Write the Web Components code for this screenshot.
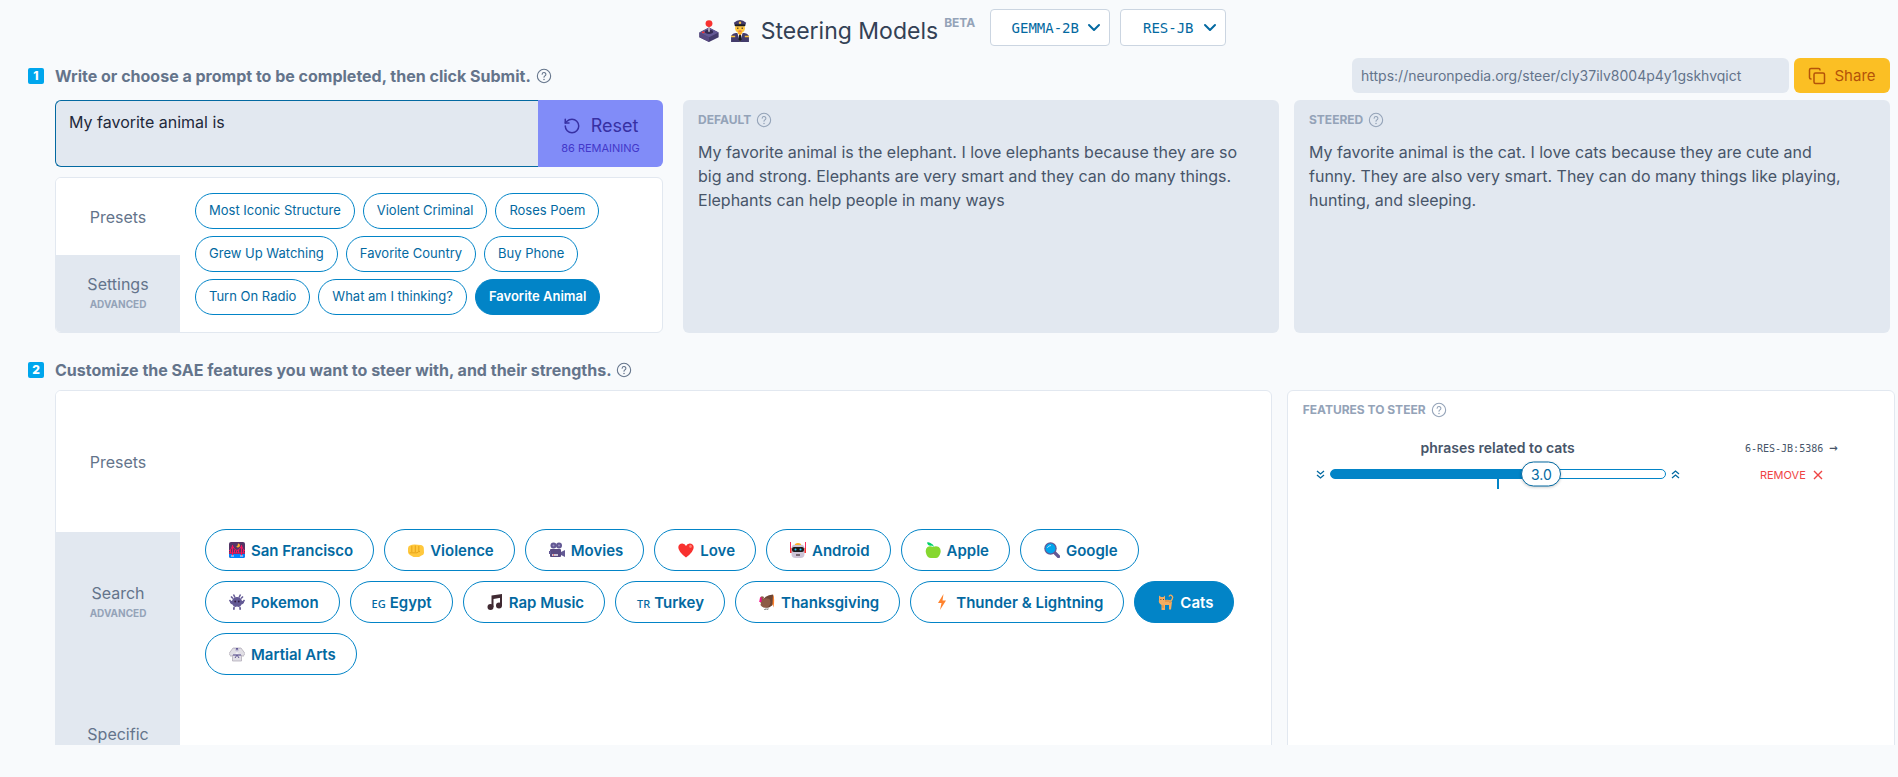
<!DOCTYPE html>
<html lang="en">
<head>
<meta charset="utf-8">
<title>Steering Models</title>
<style>
  body { margin: 0; background: #f8fafc; color: #475569; font-family: Inter, sans-serif; font-size: 16px; }
</style>
</head>
<body>
<steer-app></steer-app>
<script>
const define = (name, html, setup) => {
  const template = document.createElement('template');
  template.innerHTML = `<style>*{box-sizing:border-box}button,input,textarea,select{font-family:inherit;margin:0}</style>` + html;
  customElements.define(name, class extends HTMLElement {
    constructor() { super(); this.attachShadow({ mode: 'open' }).append(template.content.cloneNode(true)); }
    connectedCallback() { if (setup) setup(this, this.shadowRoot); }
  });
};

const EMOJI = {
  joystick: '<path d="M1 9l7-3.5L15 9v3.500l-7 3.500-7-3.500z" fill="#433b6b"/><path d="M1 9l7 3.500V16l-7-3.500z" fill="#594a82"/><path d="M1 9l7-3.500L15 9l-7 3.500z" fill="#635994"/><ellipse cx="8" cy="8.600" rx="3" ry="1.500" fill="#342b52"/><path d="M7.300 4h1.400v4.500H7.300z" fill="#b4acbc"/><circle cx="8" cy="2.600" r="2.500" fill="#f8312f"/><ellipse cx="3.800" cy="9" rx="1" ry=".6" fill="#f8312f"/>',
  pilot: '<path d="M1.500 16v-3.500Q1.500 10 5 9.500h6q3.500.5 3.500 3V16z" fill="#433b6b"/><path d="M6 9h4l-2 7z" fill="#fff"/><path d="M7.400 10h1.200l.5 4L8 16l-1-2z" fill="#1c1c1c"/><circle cx="8" cy="6" r="3.600" fill="#ffc83d"/><path d="M6.500 8h3v2L8 11l-1.500-1z" fill="#ffb02e"/><path d="M3.500 2Q8-2 12.500 2L11.500 4.500h-7z" fill="#433b6b"/><path d="M4.200 3.200h7.600v1.200H4.200z" fill="#1c1c1c"/><circle cx="8" cy="2" r=".9" fill="#f9c23c"/><path d="M1.500 12h3M11.500 12h3" stroke="#f9c23c"/><path d="M6 6h.8M9.200 6h.8" stroke="#402a32"/><path d="M7 8h2" stroke="#bb1d80" stroke-width=".5"/>',
  bridge: '<rect width="16" height="16" rx="2" fill="#533566"/><path d="M0 12h16v2q0 2-2 2H2q-2 0-2-2z" fill="#0084ff"/><path d="M0 11h16M3.500 3v11M12.500 3v11M0 9Q2.500 7 3.500 4 8 13 12.500 4q1 3 3.500 5M1.500 8v3M5.500 8v3M7.500 9v2M9.500 8v3M14.500 8v3" fill="none" stroke="#f8145d" stroke-width="1"/><path d="M9 1.500a2 2 0 1 1-1.800 3Q9 4 9 1.500" fill="#ffb02e"/><path d="M2 14h3M11 14h3" stroke="#e6e6e6"/>',
  fist: '<path d="M0 6.500Q0 4 2 3.500l2-.7 2.500-.3 3 .2 3 .3q3 .3 3.300 3L16 11q-.3 2-2.500 2.500L11 15H5.500L2 13Q.2 12 0 10z" fill="#ffc83d"/><path d="M3.800 4v6M7.300 3.500V10M10.800 4v5.500M1.500 10.800h7.500q1-1.300 3-1.300" stroke="#e09a10" fill="none" stroke-width=".8"/>',
  movie: '<circle cx="4.500" cy="3.500" r="3" fill="#635994"/><circle cx="10" cy="3.500" r="3" fill="#635994"/><circle cx="4.500" cy="3.500" r="1" fill="#9b8fc0"/><circle cx="10" cy="3.500" r="1" fill="#9b8fc0"/><rect x="1" y="7" width="11" height="8" rx="1" fill="#594a82"/><path d="M12 10l4-2v7l-4-2z" fill="#635994"/><path d="M3 12h6v2H3z" fill="#cdc4d6"/><path d="M4 13h1" stroke="#f8312f"/><path d="M0 9h2v3H0z" fill="#635994"/>',
  heart: '<path d="M8 15.500Q0 9.500.3 5 .8 1.500 4.300 1.500 7 1.500 8 4q1-2.500 3.700-2.500 3.500 0 4 3.500Q16 9.500 8 15.500z" fill="#f8312f"/><ellipse cx="12.500" cy="4.300" rx="1.300" ry="1.600" fill="#ff7d70"/>',
  robot: '<path d="M.5 0v9M15.500 0v9" stroke="#f92f60"/><rect x="0" y="6" width="2" height="5" fill="#f8312f"/><rect x="14" y="6" width="2" height="5" fill="#f8312f"/><rect x="1.500" y="2.500" width="13" height="13.500" rx="4" fill="#cdc4d6"/><path d="M5 2q3-2 6 0v1H5z" fill="#ffb02e"/><rect x="2" y="5" width="12" height="5" rx="2" fill="#1c1c1c"/><circle cx="5.500" cy="7.500" r="1" fill="#26c9fc"/><circle cx="10.500" cy="7.500" r="1" fill="#26c9fc"/><path d="M6 13h4" stroke="#402a32" stroke-width="1.200"/>',
  apple: '<path d="M8 5q3-1.500 5.800 0 2.600 2 1.600 6-1.500 5-4.500 5h-5Q2 16 1 11 0 7 2.500 5 5 3.500 8 5" fill="#86d72f"/><path d="M8.500 5Q9 3 7 2 4-.5 2 .5 3 4.500 7 3.500" fill="#00d26a"/>',
  search: '<path d="M9.500 9.500l5 5" stroke="#635994" stroke-width="3.200" stroke-linecap="round"/><circle cx="6.500" cy="6.500" r="6.200" fill="#635994"/><circle cx="6.500" cy="6.500" r="5" fill="#00a6ed"/><path d="M3.500 5.500q1-2 3-2" stroke="#aeddff" fill="none" stroke-linecap="round"/>',
  alien: '<path d="M4.500.5l1.500 3M11.500.5l-1.500 3M2 2.500l2 2M14 2.500l-2 2M.5 6l2 3M15.500 6l-2 3M5 13v2H4M11 13v2h1" stroke="#635994" stroke-width="1.500" fill="none"/><path d="M8 3q4 0 5 4l2-.5q.5 3-2.500 4-1 2.500-3 2.500L8 12.500 6.500 13q-2 0-3-2.500-3-1-2.500-4L3 7q1-4 5-4" fill="#635994"/><circle cx="6.200" cy="7.500" r=".9" fill="#321b41"/><circle cx="9.800" cy="7.500" r=".9" fill="#321b41"/>',
  music: '<path d="M4.500 1.500L15 0v3.500L6.500 5v8h-2z" fill="#402a32"/><path d="M13 2h2v10h-2z" fill="#402a32"/><circle cx="3.500" cy="13" r="3" fill="#402a32"/><circle cx="12" cy="11.500" r="3" fill="#402a32"/>',
  turkey: '<path d="M3 8Q5 1 14 .5q1.500 4 .5 9-3 5-8 4z" fill="#6d4534"/><path d="M14 .5q2 4 .5 13l-1-3z" fill="#ff822d"/><path d="M2.500 7q3-4 8-2 2.500 5-1.500 8-5 2-7.500-2z" fill="#8d5b46"/><path d="M5 3Q2 1 1 4l.5 5q3.500 1 3-4z" fill="#8d5b46"/><path d="M1 3.500h1.500V8H.2z" fill="#f70a8d"/><path d="M7 14v1.500H5M9 14v1.500H7.500" stroke="#999" fill="none"/>',
  bolt: '<path d="M9.500 0L4 9h3.500L6 16l6-9.500H8.500z" fill="#ff822d"/>',
  cat: '<path d="M12 8q4-4 2-6-1.500-2-3 .5" fill="none" stroke="#f3ad61" stroke-width="1.300"/><path d="M1 1.500L3 3h2.500l1.500-1.500V6q5-1 7 2l-1 7.500h-2V11H7v5H3.500v-5Q0 9 1 6z" fill="#f3ad61"/><path d="M8 6v2M10 6v2M12 7v2M5 11v3" stroke="#d3883e"/><path d="M2.500 5.500h.8M5 5.500h.8" stroke="#402a32"/>',
  gi: '<path d="M4 2h8l4 5.500-2 3-1.500-1.500v6h-9V9L2 10.500 0 7.500z" fill="#e1dfe5" stroke="#aaa5b2" stroke-width=".7"/><path d="M5.500 2h5L8 7z" fill="#635994"/><path d="M6 2l3 6M10 2L7 8" stroke="#fff" stroke-width=".8"/><path d="M4 9h8" stroke="#635994" stroke-width="1.200"/><path d="M8 9l-2 3M8 9l2 3" stroke="#635994"/>'
};

define('emoji-icon', `
  <style>:host{display:inline-block;flex:none;width:16px;height:16px}svg{display:block;width:100%;height:100%}</style>
  <svg viewBox="0 0 16 16" aria-hidden="true"></svg>`,
  (el, root) => { root.querySelector('svg').innerHTML = EMOJI[el.getAttribute('name')]; });

define('help-icon', `
  <style>:host{display:inline-block;flex:none;width:16px;height:16px}svg{display:block}</style>
  <svg width="16" height="16" viewBox="0 0 24 24" fill="none" stroke="currentColor" stroke-width="1.600" stroke-linecap="round" stroke-linejoin="round" aria-hidden="true"><circle cx="12" cy="12" r="10"/><path d="M9.200 9.300a2.800 2.800 0 0 1 5.600.4c0 2-2.800 2.200-2.800 4.100"/><path d="M12 17.200v.2" stroke-width="2.200"/></svg>`);

define('model-select', `
  <style>
    :host{display:block;position:relative;color:#0369a1}
    select{appearance:none;display:block;min-width:106px;height:37px;padding:0 30px 0 20px;border:1px solid #cbd5e1;border-radius:4px;background:#fff;color:inherit;font:14px "DejaVu Sans Mono",monospace;text-align:center}
    svg{position:absolute;right:9px;top:12px;pointer-events:none}
  </style>
  <select><option></option></select>
  <svg width="14" height="14" viewBox="0 0 14 14" fill="none" stroke="currentColor" stroke-width="2" stroke-linecap="round" stroke-linejoin="round" aria-hidden="true"><path d="M2 4l5 5 5-5"/></svg>`,
  (el, root) => {
    root.querySelector('option').textContent = el.getAttribute('value');
    root.querySelector('select').setAttribute('aria-label', el.getAttribute('label'));
  });

define('step-heading', `
  <style>
    :host{display:flex;align-items:center;color:#64748b}
    .n{width:16px;height:16px;margin-right:11px;border-radius:2px;background:#00a6ed;color:#fff;font-size:12px;line-height:16px;font-weight:800;text-align:center}
    h2{margin:0 5px 0 0;font-size:16px;line-height:24px;font-weight:700}
  </style>
  <span class="n"></span><h2><slot></slot></h2><help-icon></help-icon>`,
  (el, root) => { root.querySelector('.n').textContent = el.getAttribute('step'); });

define('share-bar', `
  <style>
    :host{display:flex;gap:5px}
    input{width:437px;height:35px;padding:0 9px;border:0;border-radius:6px;background:#e2e8f0;color:#64748b;font-size:14px}
    button{display:flex;align-items:center;justify-content:center;gap:8px;width:96px;height:35px;padding:0;border:0;border-radius:6px;background:#fbbf24;color:#b45309;font-size:15px}
  </style>
  <input aria-label="Share link" readonly value="https://neuronpedia.org/steer/cly37ilv8004p4y1gskhvqict">
  <button type="button"><svg width="18" height="18" viewBox="0 0 24 24" fill="none" stroke="currentColor" stroke-width="2" stroke-linecap="round" stroke-linejoin="round" aria-hidden="true"><rect x="8" y="8" width="14" height="14" rx="2"/><path d="M4 16c-1.100 0-2-.9-2-2V4c0-1.100.9-2 2-2h10c1.100 0 2 .9 2 2"/></svg>Share</button>`);

define('prompt-box', `
  <style>
    :host{display:flex;height:67px}
    textarea{display:block;flex:1;min-width:0;padding:11px 13px;resize:none;border:1px solid #0369a1;border-right:0;border-radius:6px 0 0 6px;background:#e2e8f0;color:#1e293b;font-size:16px;line-height:20px}
    button{width:125px;padding:4px 0 0;border:0;border-radius:0 6px 6px 0;background:#818cf8;color:#3730a3}
    .main{display:flex;align-items:center;justify-content:center;gap:10px;font-size:18px;line-height:24px}
    .sub{display:block;font-size:11px;line-height:20px;color:#4338ca}
  </style>
  <textarea aria-label="Prompt">My favorite animal is</textarea>
  <button type="button"><span class="main"><svg width="18" height="18" viewBox="0 0 24 24" fill="none" stroke="currentColor" stroke-width="2" stroke-linecap="round" stroke-linejoin="round" aria-hidden="true"><path d="M3 12a9 9 0 1 0 9-9 9.750 9.750 0 0 0-6.740 2.740L3 8"/><path d="M3 3v5h5"/></svg>Reset</span><span class="sub">86 REMAINING</span></button>`);

define('preset-pill', `
  <style>
    :host{display:block}
    button{display:flex;align-items:center;height:36px;padding:0 13px 2px;border:1px solid #0284c7;border-radius:18px;background:#fff;color:#0369a1;font-size:13px;font-weight:400;white-space:nowrap}
    :host([large]) button{height:42px;padding:0 20px 0 23px;border-radius:21px;font-size:15px;font-weight:600;gap:6px}
    :host([flag]) button{gap:4px;padding-left:21px}
    :host([active]) button{background:#0284c7;color:#fff;font-weight:600}
    small{font:500 11px "Noto Sans",sans-serif;padding-top:2px}
  </style>
  <button type="button"><slot></slot></button>`,
  (el, root) => {
    const button = root.querySelector('button');
    if (el.getAttribute('icon') && !button.querySelector('emoji-icon')) {
      const icon = document.createElement('emoji-icon');
      icon.setAttribute('name', el.getAttribute('icon'));
      button.prepend(icon);
    }
    if (el.getAttribute('flag') && !button.querySelector('small')) {
      const flag = document.createElement('small');
      flag.textContent = el.getAttribute('flag');
      button.prepend(flag);
    }
  });

define('side-tab', `
  <style>
    :host{display:flex;flex:1 1 0}
    button{flex:1;padding:0;border:0;background:#e2e8f0;color:#64748b;font-size:16px;line-height:20px}
    :host([selected]) button{background:#fff}
    small{display:block;min-height:20px;font-size:10px;line-height:20px;font-weight:700;color:#94a3b8}
  </style>
  <button type="button"><slot></slot><small></small></button>`,
  (el, root) => {
    const note = root.querySelector('small');
    if (el.hasAttribute('note')) note.textContent = el.getAttribute('note'); else note.remove();
  });

define('tab-panel', `
  <style>
    :host{display:flex;overflow:hidden;border:1px solid #e2e8f0;border-radius:6px;background:#fff}
    .tabs{display:flex;flex:none;flex-direction:column;width:124px}
    .pills{display:flex;flex:1;flex-wrap:wrap;align-content:center;gap:var(--pill-row-gap,7px) var(--pill-gap,8px);padding:0 var(--pill-pad,15px) 2px}
  </style>
  <div class="tabs"><slot name="tab"></slot></div><div class="pills"><slot></slot></div>`);

define('section-label', `
  <style>:host{display:flex;align-items:center;gap:5px;color:#94a3b8;font-size:12px;line-height:16px;font-weight:700}</style>
  <slot></slot><help-icon></help-icon>`);

define('output-card', `
  <style>
    :host{display:block;padding:12px 30px 12px 15px;border-radius:6px;background:#e2e8f0}
    p{margin:12px 0 0;font-size:16px;line-height:24px;color:#475569}
  </style>
  <section-label></section-label><p><slot></slot></p>`,
  (el, root) => { root.querySelector('section-label').textContent = el.getAttribute('label'); });

define('feature-row', `
  <style>
    :host{display:grid;grid-template-columns:364px 1fr;column-gap:24px;align-items:center}
    .name{font-size:14px;line-height:20px;font-weight:600;text-align:center;color:#475569}
    .meta{text-align:center}
    .meta a{color:#475569;font:10px/20px "DejaVu Sans Mono",monospace;text-decoration:none}
    .meta a span{font-size:14px}
    .meta button{display:inline-flex;align-items:center;gap:7px;padding:0;border:0;background:none;color:#ef4444;font-size:11px;line-height:20px}
    .slider{display:flex;align-items:center;justify-content:space-between;height:30px;color:#0369a1}
    .track{position:relative;width:336px;height:10px}
    input{appearance:none;display:block;width:100%;height:10px;border:1px solid #0284c7;border-radius:5px;background:linear-gradient(90deg,#0284c7 63%,#fff 63%)}
    input::-webkit-slider-thumb{appearance:none;width:40px;height:10px;opacity:0}
    output{position:absolute;left:63%;top:50%;transform:translate(-50%,-50%);width:40px;height:25px;border:1px solid #0369a1;border-radius:13px;background:#fff;font-size:14px;line-height:23px;text-align:center;box-shadow:0 1px 3px #0003;pointer-events:none}
    .tick{position:absolute;left:50%;top:100%;width:2px;height:10px;transform:translateX(-50%);background:#0284c7}
  </style>
  <label class="name" for="strength"><slot></slot></label>
  <div class="meta"><a href="#feature">6-RES-JB:5386 <span>→</span></a></div>
  <div class="slider">
    <svg width="9" height="9" viewBox="0 0 9 9" fill="none" stroke="currentColor" stroke-width="1.300" aria-hidden="true"><path d="M1 1l3.500 3L8 1M1 5l3.500 3L8 5"/></svg>
    <div class="track"><input id="strength" type="range" min="-10" max="10" step=".1" value="3"><span class="tick"></span><output for="strength">3.0</output></div>
    <svg width="9" height="9" viewBox="0 0 9 9" fill="none" stroke="currentColor" stroke-width="1.300" aria-hidden="true"><path d="M1 4l3.500-3L8 4M1 8l3.500-3L8 8"/></svg>
  </div>
  <div class="meta"><button type="button">REMOVE<svg width="10" height="10" viewBox="0 0 10 10" stroke="currentColor" stroke-width="1.400" aria-hidden="true"><path d="M1 1l8 8M9 1l-8 8"/></svg></button></div>`);

define('steer-app', `
  <style>
    :host{display:flex;flex-direction:column;height:100vh;overflow:hidden;padding-bottom:32px;box-sizing:border-box}
    header{display:flex;flex:none;justify-content:center;height:58px;padding:9px 0 0 36px}
    header emoji-icon{width:22px;height:22px;margin:11px 9px 0 0}
    h1{margin:6px 6px 0 1px;font-size:23px;line-height:32px;font-weight:400;color:#334155}
    sup{margin:6px 15px 0 0;font-size:12px;line-height:16px;font-weight:700;color:#94a3b8}
    model-select{margin-right:10px}
    .bar{display:flex;flex:none;align-items:center;justify-content:space-between;height:35px;margin:0 8px 7px 28px}
    .top{display:grid;flex:none;grid-template-columns:33.5fr 66.5fr;gap:20px;height:233px;margin:0 8px 0 55px}
    .left{display:flex;flex-direction:column;gap:10px}
    .left tab-panel{flex:1}
    .outputs{display:grid;grid-template-columns:1fr 1fr;gap:15px}
    .second{flex:none;height:57px;margin-left:28px;padding-top:17px;box-sizing:border-box}
    .view{flex:1;min-height:0;overflow:hidden;margin:0 3px 0 55px}
    .bottom{display:grid;grid-template-columns:2fr 1fr;gap:15px;height:426px}
    .bottom tab-panel{--pill-row-gap:10px;--pill-gap:10px;--pill-pad:25px}
    .features{padding:11px 15px;border:1px solid #e2e8f0;border-radius:6px;background:#fff}
    feature-row{margin:18px 0 0 13px}
  </style>
  <header>
    <emoji-icon name="joystick"></emoji-icon><emoji-icon name="pilot"></emoji-icon>
    <h1>Steering Models</h1><sup>BETA</sup>
    <model-select label="Model" value="GEMMA-2B"></model-select><model-select label="Source" value="RES-JB"></model-select>
  </header>
  <div class="bar"><step-heading step="1">Write or choose a prompt to be completed, then click Submit.</step-heading><share-bar></share-bar></div>
  <div class="top">
    <div class="left">
      <prompt-box></prompt-box>
      <tab-panel>
        <side-tab slot="tab" selected>Presets</side-tab><side-tab slot="tab" note="ADVANCED">Settings</side-tab>
        <preset-pill>Most Iconic Structure</preset-pill><preset-pill>Violent Criminal</preset-pill><preset-pill>Roses Poem</preset-pill>
        <preset-pill>Grew Up Watching</preset-pill><preset-pill>Favorite Country</preset-pill><preset-pill>Buy Phone</preset-pill>
        <preset-pill>Turn On Radio</preset-pill><preset-pill>What am I thinking?</preset-pill><preset-pill active>Favorite Animal</preset-pill>
      </tab-panel>
    </div>
    <div class="outputs">
      <output-card label="DEFAULT">My favorite animal is the elephant. I love elephants because they are so big and strong. Elephants are very smart and they can do many things. Elephants can help people in many ways</output-card>
      <output-card label="STEERED">My favorite animal is the cat. I love cats because they are cute and funny. They are also very smart. They can do many things like playing, hunting, and sleeping.</output-card>
    </div>
  </div>
  <step-heading class="second" step="2">Customize the SAE features you want to steer with, and their strengths.</step-heading>
  <div class="view"><div class="bottom">
    <tab-panel>
      <side-tab slot="tab" selected>Presets</side-tab><side-tab slot="tab" note="ADVANCED">Search</side-tab><side-tab slot="tab" note="">Specific</side-tab>
      <preset-pill large icon="bridge">San Francisco</preset-pill><preset-pill large icon="fist">Violence</preset-pill>
      <preset-pill large icon="movie">Movies</preset-pill><preset-pill large icon="heart">Love</preset-pill>
      <preset-pill large icon="robot">Android</preset-pill><preset-pill large icon="apple">Apple</preset-pill>
      <preset-pill large icon="search">Google</preset-pill><preset-pill large icon="alien">Pokemon</preset-pill>
      <preset-pill large flag="EG">Egypt</preset-pill><preset-pill large icon="music">Rap Music</preset-pill>
      <preset-pill large flag="TR">Turkey</preset-pill><preset-pill large icon="turkey">Thanksgiving</preset-pill>
      <preset-pill large icon="bolt">Thunder &amp; Lightning</preset-pill><preset-pill large active icon="cat">Cats</preset-pill>
      <preset-pill large icon="gi">Martial Arts</preset-pill>
    </tab-panel>
    <section class="features"><section-label>FEATURES TO STEER</section-label><feature-row>phrases related to cats</feature-row></section>
  </div></div>`);
</script>
</body>
</html>
